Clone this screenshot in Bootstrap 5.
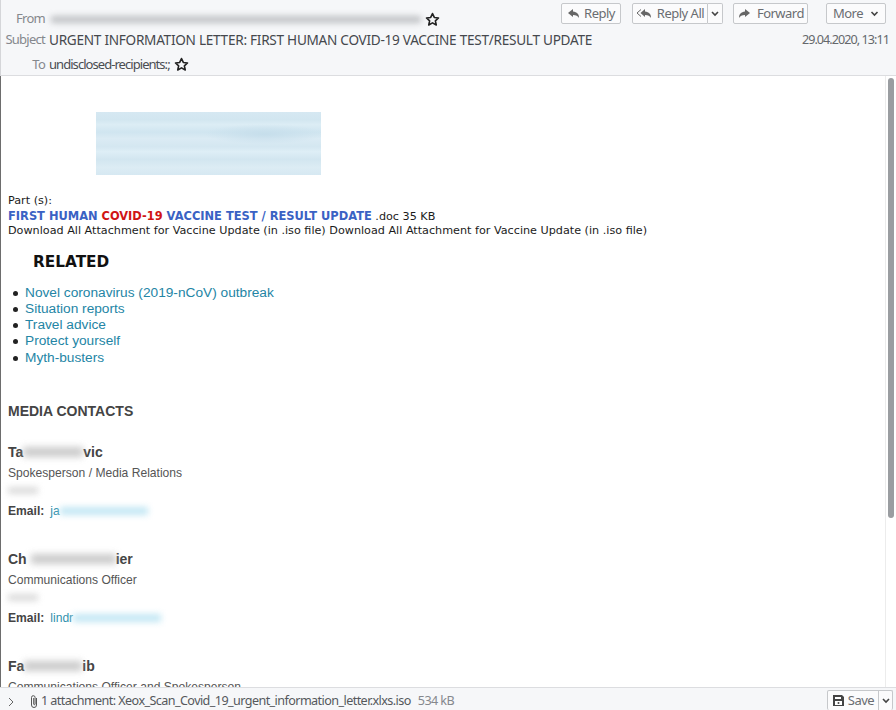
<!DOCTYPE html>
<html lang="en">
<head>
<meta charset="utf-8">
<title>Message</title>
<link href="https://cdn.jsdelivr.net/npm/bootstrap@5.3.0/dist/css/bootstrap.min.css" rel="stylesheet">
<style>
html,body{height:100%;overflow:hidden;background:#fff}
.mail-shell{height:710px;width:896px;position:relative;overflow:hidden}
.mail-head{height:76px;flex:none;background:#f6f7f9;border-bottom:1px solid #dcdde0;border-left:1px solid #d5d6d9;font-family:"Noto Sans",sans-serif;font-size:13px;color:#3c3f44}
.hrow{display:flex;align-items:center;position:relative}
.hrow1{height:29px;padding-top:9px}
.hrow2{height:22px}
.hrow3{height:25px;padding-top:2px}
.hlabel{width:44px;text-align:right;color:#85888d;margin-right:4px;flex:none;letter-spacing:-.75px}
.subj{font-size:13.6px;letter-spacing:-.27px;color:#45484d}
.to-val{letter-spacing:-.95px;color:#4a4d52}
.hdate{margin-left:auto;padding-right:7px;color:#65686c;font-size:12.6px;letter-spacing:-.95px}
.blurline{display:inline-block;height:7px;background:#9a9da1;filter:blur(3px);opacity:.6}
.from-blur{width:370px;margin:0 4px 0 2px}
.tools{position:absolute;right:10px;top:3px;display:flex}
.tb{height:21px;border:1px solid #c6c8cb;background:#fbfbfc;border-radius:2px;font-family:"Noto Sans",sans-serif;font-size:13px;letter-spacing:-.5px;color:#6a6d71;padding:0;display:flex;align-items:center;justify-content:center;gap:3px;line-height:1}
.tb:hover{background:#fbfbfc}
.w-reply{width:60px;margin-right:11px}
.w-all{width:76px}
.w-split{width:15px;margin-right:10px}
.w-fwd{width:75px;margin-right:18px}
.w-more{width:60px}
.w-save{width:52px}
.w-ssplit{width:14px}
.tb-split{border-left:0;border-radius:0 2px 2px 0}
.tb-main{border-radius:2px 0 0 2px}
.mail-body{flex:1 1 auto;min-height:0;overflow:hidden;padding:36px 0 0 7px;border-left:1px solid #6d6d6d;font-family:"DejaVu Sans",sans-serif;font-size:11.2px;line-height:14.5px;color:#1b1b1b}
.banner{width:225px;height:63px;margin:0 0 19px 88px;background:radial-gradient(ellipse 60px 10px at 75% 35%,#c6deeb,transparent),linear-gradient(180deg,#d6e8f2 0,#d2e6f0 12%,#dcedf5 20%,#d0e5f0 32%,#dbebf4 42%,#d4e7f1 55%,#deeef6 63%,#d2e6f0 75%,#dcecf4 88%,#d6e8f2 100%)}
.blue-t{color:#3a62c4;font-weight:700;font-size:11.45px}
.red-t{color:#d01414;font-weight:700;font-size:11.4px}
.rel{font-size:15.3px;font-weight:700;color:#111;margin:13px 0 0 25px;line-height:20px}
.rel-list{list-style:none;margin:13px 0 0;padding:0;font-family:"Liberation Sans",sans-serif;font-size:13.7px;line-height:16.25px}
.rel-list li{position:relative;padding-left:17px;color:#2485a5}
.rel-list li::before{content:"";position:absolute;left:5px;top:6px;width:5px;height:5px;border-radius:50%;background:#222}
.contacts{font-family:"Liberation Sans",sans-serif;color:#444}
.contacts-h{font-size:14px;font-weight:700;margin:35px 0 0;line-height:20px}
.pers{height:107px;font-size:12.1px}
.pers-first{margin-top:21px}
.p-name{font-size:14px;font-weight:700;line-height:20px;display:flex;align-items:center}
.p-role{line-height:16px;margin-top:3px;color:#555}
.p-sm{height:7px;width:30px;background:#ccc;filter:blur(3px);margin:6px 0;opacity:.7}
.p-mail{line-height:16px;margin-top:9px;display:flex;align-items:center}
.p-mail b{margin-right:6px}
.p-link{color:#2f90ad}
.nb{display:inline-block;height:10px;background:#b5b5b5;filter:blur(3.5px);opacity:.7}
.lb{display:inline-block;height:8px;background:#c3e7f4;filter:blur(3px)}
.sbar{position:absolute;right:0;top:76px;bottom:23px;width:11px;background:#fff;border-left:1px solid #ececec}
.sbar i{position:absolute;left:2px;top:2px;width:6px;height:440px;border-radius:3px;background:#9a9da1}
.mail-foot{height:23px;flex:none;background:#f6f7f9;border-top:1px solid #dcdde0;font-family:"Noto Sans",sans-serif;font-size:12.6px;color:#55585c;letter-spacing:-.58px;display:flex;align-items:center;position:relative;z-index:1;padding-top:5px}
.ft-size{color:#85888d;margin-left:7px}
.ft-tools{margin-left:auto;display:flex;margin-right:3px;align-self:flex-start;margin-top:-3px}
.ft-tools .tb{height:20px;border-bottom:0}
</style>
</head>
<body>
<div class="mail-shell d-flex flex-column">
  <header class="mail-head">
    <div class="hrow hrow1">
      <span class="hlabel">From</span>
      <span class="blurline from-blur"></span>
      <svg width="15" height="15" viewBox="0 0 24 24" fill="none" stroke="#222" stroke-width="2.6" stroke-linejoin="round"><path d="M12 2.500l2.900 6.200 6.700.8-5 4.600 1.400 6.700-6-3.400-6 3.400 1.400-6.700-5-4.600 6.700-.8z"/></svg>
      <div class="tools">
        <button type="button" class="btn tb w-reply"><svg width="14" height="12" viewBox="0 0 14 12"><path fill="#666" d="M6 1L1 5l5 4V7c3 0 5 1 6 3 0-4-2-6-6-6.500z"/></svg>Reply</button>
        <button type="button" class="btn tb tb-main w-all"><svg width="18" height="12" viewBox="0 0 18 12"><path fill="none" stroke="#666" d="M5 1.500L1 5l4 3.500"/><path fill="#666" d="M9 1L4.500 5 9 9V7c3 0 5 1 6 3 0-4-2-6-6-6.500z"/></svg>Reply All</button>
        <button type="button" class="btn tb tb-split w-split"><svg width="8" height="6" viewBox="0 0 8 6"><path fill="none" stroke="#444" stroke-width="1.600" d="M1 1l3 3 3-3"/></svg></button>
        <button type="button" class="btn tb w-fwd"><svg width="14" height="12" viewBox="0 0 14 12"><path fill="#666" d="M8 1l5 4-5 4V7c-3 0-5 1-6 3 0-4 2-6 6-6.500z"/></svg>&nbsp;Forward</button>
        <button type="button" class="btn tb w-more"><span>More</span><svg width="9" height="6" viewBox="0 0 8 6" class="ms-1"><path fill="none" stroke="#444" stroke-width="1.600" d="M1 1l3 3 3-3"/></svg></button>
      </div>
    </div>
    <div class="hrow hrow2">
      <span class="hlabel">Subject</span>
      <span class="subj">URGENT INFORMATION LETTER: FIRST HUMAN COVID-19 VACCINE TEST/RESULT UPDATE</span>
      <span class="hdate">29.04.2020, 13:11</span>
    </div>
    <div class="hrow hrow3">
      <span class="hlabel">To</span>
      <span class="to-val">undisclosed-recipients:;</span>
      <svg class="ms-1" width="15" height="15" viewBox="0 0 24 24" fill="none" stroke="#222" stroke-width="2.6" stroke-linejoin="round"><path d="M12 2.500l2.900 6.200 6.700.8-5 4.600 1.400 6.700-6-3.400-6 3.400 1.400-6.700-5-4.600 6.700-.8z"/></svg>
    </div>
  </header>
  <main class="mail-body">
    <div class="banner"></div>
    <div>Part (s):</div>
    <div><span class="blue-t">FIRST HUMAN </span><span class="red-t">COVID-19</span><span class="blue-t"> VACCINE TEST / RESULT UPDATE</span> .doc 35 KB</div>
    <div>Download All Attachment for Vaccine Update (in .iso file) Download All Attachment for Vaccine Update (in .iso file)</div>
    <div class="rel">RELATED</div>
    <ul class="rel-list">
      <li>Novel coronavirus (2019-nCoV) outbreak</li>
      <li>Situation reports</li>
      <li>Travel advice</li>
      <li>Protect yourself</li>
      <li>Myth-busters</li>
    </ul>
    <div class="contacts">
      <div class="contacts-h">MEDIA CONTACTS</div>
      <div class="pers pers-first">
        <div class="p-name">Ta<span class="nb" style="width:60px"></span>vic</div>
        <div class="p-role">Spokesperson / Media Relations</div>
        <div class="p-sm"></div>
        <div class="p-mail"><b>Email:</b><span class="p-link">ja</span><span class="lb" style="width:88px"></span></div>
      </div>
      <div class="pers">
        <div class="p-name">Ch<span class="nb ms-1" style="width:85px"></span>ier</div>
        <div class="p-role">Communications Officer</div>
        <div class="p-sm"></div>
        <div class="p-mail"><b>Email:</b><span class="p-link">lindr</span><span class="lb" style="width:88px"></span></div>
      </div>
      <div class="pers">
        <div class="p-name">Fa<span class="nb" style="width:58px"></span>ib</div>
        <div class="p-role">Communications Officer and Spokesperson</div>
      </div>
    </div>
  </main>
  <div class="sbar"><i></i></div>
  <footer class="mail-foot">
    <svg class="ms-2" width="6" height="10" viewBox="0 0 6 10"><path fill="none" stroke="#666" d="M1 1l4 4-4 4"/></svg>
    <svg width="10" height="15" viewBox="0 0 10 15" style="margin:0 2px 0 15px"><path fill="none" stroke="#555" d="M7.500 4v7a2.500 2.500 0 0 1-5 0V3.500a1.800 1.800 0 0 1 3.600 0V10a.7.7 0 0 1-1.400 0V4"/></svg>
    <span>1 attachment: Xeox_Scan_Covid_19_urgent_information_letter.xlxs.iso</span>
    <span class="ft-size">534 kB</span>
    <div class="ft-tools">
      <button type="button" class="btn tb tb-main w-save"><svg width="13" height="13" viewBox="0 0 13 13"><path fill="#444" d="M1 1h9l2 2v9H1z"/><path fill="#fff" d="M3 3h6v2H3zM3 7h7v4H3z"/><circle cx="6.500" cy="9" r="1" fill="#444"/></svg>Save</button>
      <button type="button" class="btn tb tb-split w-ssplit"><svg width="8" height="6" viewBox="0 0 8 6"><path fill="none" stroke="#444" stroke-width="1.600" d="M1 1l3 3 3-3"/></svg></button>
    </div>
  </footer>
</div>
<script src="https://cdn.jsdelivr.net/npm/bootstrap@5.3.0/dist/js/bootstrap.bundle.min.js"></script>
</body>
</html>
